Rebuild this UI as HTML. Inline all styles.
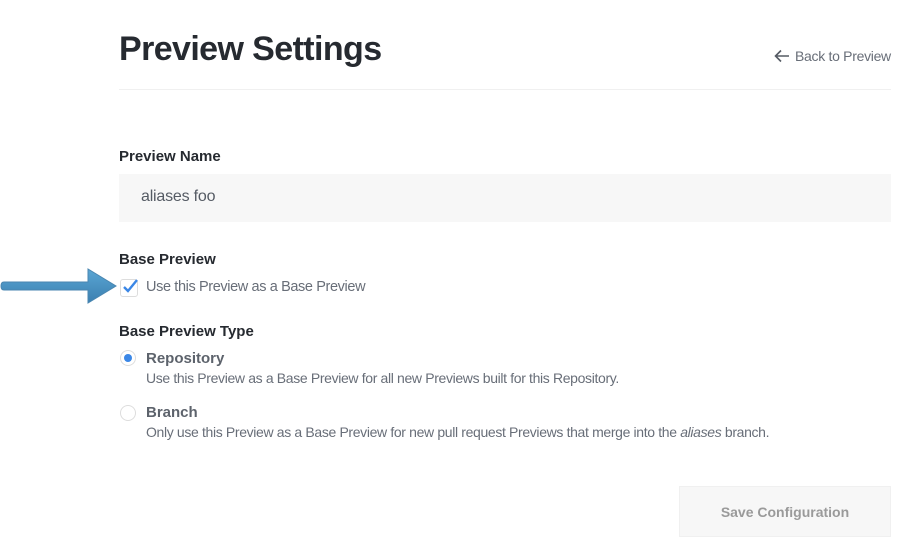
<!DOCTYPE html>
<html><head><meta charset="utf-8"><style>
body{margin:0;width:905px;height:547px;background:#fff;font-family:"Liberation Sans",sans-serif;position:relative;overflow:hidden;color:#2b2f36}
.a{position:absolute;white-space:nowrap}
h1{position:absolute;left:119px;top:30px;margin:0;font-size:34px;font-weight:bold;color:#262a30;letter-spacing:-0.6px}
.lbl{font-weight:bold;font-size:15px;color:#262a30}
.g{color:#686e78;font-size:14.5px}
</style></head><body>
<h1>Preview Settings</h1>
<div class="a g" style="left:774px;top:48px;font-size:14px;letter-spacing:-0.3px">
<svg width="16" height="14" viewBox="0 0 16 14" style="vertical-align:-2px;margin-right:5px"><path d="M15 7H2M7 1.5L1.5 7 7 12.5" stroke="#555b64" stroke-width="1.6" fill="none"/></svg>Back to Preview</div>
<div class="a" style="left:119px;top:89px;width:772px;height:1px;background:#f0f0f0"></div>
<div class="a lbl" style="left:119px;top:148px">Preview Name</div>
<div class="a" style="left:119px;top:174px;width:772px;height:48px;background:#f7f7f7"></div>
<div class="a" style="left:141px;top:188px;font-size:16px;color:#555b64;letter-spacing:-0.2px">aliases foo</div>
<div class="a lbl" style="left:119px;top:251px">Base Preview</div>
<div class="a" style="left:120px;top:279px;width:16px;height:16px;border:1px solid #ddd;border-radius:3px;background:#fff"></div>
<svg class="a" style="left:121px;top:278px" width="18" height="16" viewBox="0 0 18 16"><path d="M3 9l4 4 9-11" stroke="#3b87e6" stroke-width="2.4" fill="none"/></svg>
<div class="a g" style="left:146px;top:279px;letter-spacing:-0.38px">Use this Preview as a Base Preview</div>
<svg class="a" style="left:0;top:266px" width="120" height="40" viewBox="0 0 120 40"><defs><linearGradient id="gr" x1="0" y1="0" x2="0" y2="1"><stop offset="0" stop-color="#5aa6d4"/><stop offset="1" stop-color="#3b7fb0"/></linearGradient></defs><path d="M4 16h84V3l28 17-28 17V24H4q-3 0-3-4t3-4z" fill="url(#gr)" stroke="#4a86b0" stroke-width="1"/></svg>
<div class="a lbl" style="left:119px;top:323px">Base Preview Type</div>
<div class="a" style="left:120px;top:350px;width:14px;height:14px;border:1px solid #ddd;border-radius:50%"></div>
<div class="a" style="left:124px;top:354px;width:8px;height:8px;border-radius:50%;background:#3b87e6"></div>
<div class="a" style="left:146px;top:350px;font-weight:bold;font-size:15px;color:#5d636c">Repository</div>
<div class="a g" style="left:146px;top:370px;font-size:14px;letter-spacing:-0.35px">Use this Preview as a Base Preview for all new Previews built for this Repository.</div>
<div class="a" style="left:120px;top:405px;width:14px;height:14px;border:1px solid #ddd;border-radius:50%"></div>
<div class="a" style="left:146px;top:404px;font-weight:bold;font-size:15px;color:#5d636c">Branch</div>
<div class="a g" style="left:146px;top:424px;font-size:14px;letter-spacing:-0.35px">Only use this Preview as a Base Preview for new pull request Previews that merge into the <i>aliases</i> branch.</div>
<div class="a" style="left:679px;top:486px;width:212px;height:51px;background:#f7f7f7;border:1px solid #f0f0f0;box-sizing:border-box"></div>
<div class="a" style="left:679px;top:504px;width:212px;text-align:center;font-weight:bold;font-size:14px;color:#9a9a9a">Save Configuration</div>
</body></html>
